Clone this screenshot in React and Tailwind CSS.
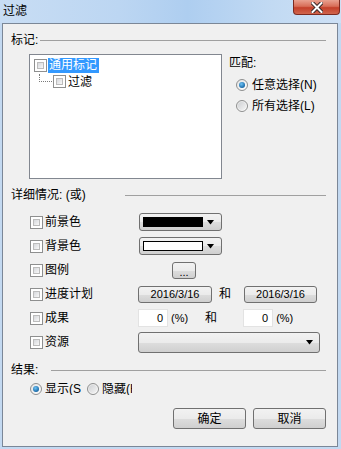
import React from "react";

const font = { fontFamily: '"Liberation Sans", "Noto Sans CJK SC", sans-serif' };

function Check() {
  return (
    <div className="w-[13px] h-[13px] border border-[#8e8f8f] bg-white p-[2px] shrink-0">
      <div className="w-full h-full border border-[#bcbcbc] bg-gradient-to-br from-[#d6d8dc] to-[#f8f8f8]" />
    </div>
  );
}

function Radio({ on }) {
  return (
    <div className="w-[12px] h-[12px] rounded-full border border-[#8e8f8f] bg-gradient-to-br from-[#e4e4e4] to-[#ffffff] flex items-center justify-center shrink-0">
      {on ? (
        <div className="w-[6px] h-[6px] rounded-full bg-[radial-gradient(circle_at_40%_35%,#6fc3f5,#1a6aa8_70%,#0e3f6e)]" />
      ) : (
        <div className="w-[8px] h-[8px] rounded-full bg-gradient-to-br from-[#cfd1d4] to-[#f4f4f4]" />
      )}
    </div>
  );
}

function Btn({ w, h = "h-[17px]", children, extra = "" }) {
  return (
    <div
      className={`${w} ${h} ${extra} rounded-[3px] border border-[#707070] bg-[linear-gradient(#f2f2f2_0%,#ebebeb_50%,#dddddd_51%,#cfcfcf_100%)] flex items-center justify-center text-[11px] leading-none text-black shrink-0`}
    >
      {children}
    </div>
  );
}

function Arrow() {
  return (
    <svg width="8" height="5" viewBox="0 0 8 5" className="shrink-0">
      <path d="M0 0 H7 L3.5 4.5 Z" fill="#000" />
    </svg>
  );
}

function Header({ label, labelW, lineMl = "ml-[1px]" }) {
  return (
    <div className="flex items-center h-[16px] pl-[8px] pr-[11px]">
      <div className={`${labelW} shrink-0 text-[12px] leading-[16px] whitespace-nowrap`}>{label}</div>
      <div className={`flex-1 h-px bg-[#a0a0a0] ${lineMl}`} />
    </div>
  );
}

function Row({ label, children }) {
  return (
    <div className="flex items-center h-[24px] pl-[27px]">
      <div className="w-[108px] shrink-0 flex items-center gap-[2px]">
        <Check />
        <span className="text-[12px] leading-none whitespace-nowrap">{label}</span>
      </div>
      <div className="flex items-center">{children}</div>
    </div>
  );
}

function NumInput() {
  return (
    <div className="w-[30px] h-[18px] bg-white border border-[#e3e3e3] flex items-center justify-end pr-[4px] text-[11px] leading-none shrink-0">
      0
    </div>
  );
}

export default function App() {
  return (
    <div className="w-[341px] h-[449px] bg-[#c3d9f1] flex flex-col text-black overflow-hidden" style={font}>
      {/* title bar */}
      <div className="h-[23px] flex justify-between bg-[linear-gradient(90deg,#c8ddf4_0%,#bcd6f2_35%,#aecef0_55%,#c2daf3_80%,#cde0f5_100%)] pl-[3px]">
        <div className="text-[12px] leading-[22px] text-black">过滤</div>
        <div className="w-[47px] h-[15px] mr-[1px] rounded-b-[4px] border border-t-0 border-[#7c2a20] bg-[linear-gradient(#e9a190_0%,#d86e58_45%,#c4402a_55%,#d0654d_100%)] flex items-center justify-center">
          <svg width="12" height="11" viewBox="0 0 12 11">
            <path d="M1.5 1 L10.5 10 M10.5 1 L1.5 10" stroke="#3b2a2a" strokeWidth="4" strokeLinecap="square" />
            <path d="M1.5 1 L10.5 10 M10.5 1 L1.5 10" stroke="#ffffff" strokeWidth="2" strokeLinecap="square" />
          </svg>
        </div>
      </div>
      {/* client */}
      <div className="ml-[2px] w-[336px] h-[424px] border border-[#7b8797] bg-[#f0f0f0] flex flex-col">
        <div className="mt-[8px]">
          <Header label="标记:" labelW="w-[28px]" />
        </div>
        <div className="flex mt-[6px]">
          <div className="ml-[26px] w-[193px] h-[125px] bg-white border border-[#828790] pt-[3px] pl-[4px] shrink-0">
            <div className="flex items-center h-[15px]">
              <Check />
              <div className="ml-[1px] bg-[#3399ff] text-white text-[12px] leading-[15px] px-[1px] w-[51px]">通用标记</div>
            </div>
            <div className="flex items-center h-[15px] mt-[1px]">
              <div className="relative w-[19px] h-[15px]">
                <div className="absolute left-[5px] top-0 h-[8px] border-l border-dotted border-[#7a7a7a]" />
                <div className="absolute left-[5px] top-[7px] w-[13px] border-t border-dotted border-[#7a7a7a]" />
              </div>
              <Check />
              <span className="ml-[2px] text-[12px] leading-none">过滤</span>
            </div>
          </div>
          <div className="ml-[7px] mt-[2px]">
            <div className="text-[12px] leading-[14px]">匹配:</div>
            <div className="ml-[7px] mt-[5px] flex items-center h-[20px] gap-[4px]">
              <Radio on />
              <span className="text-[12px] leading-none">任意选择(N)</span>
            </div>
            <div className="ml-[7px] mt-[1px] flex items-center h-[20px] gap-[4px]">
              <Radio />
              <span className="text-[12px] leading-none">所有选择(L)</span>
            </div>
          </div>
        </div>
        <div className="mt-[8px]">
          <Header label="详细情况: (或)" labelW="w-[114px]" lineMl="ml-0" />
        </div>
        <div className="mt-[7px] flex flex-col">
          <Row label="前景色">
            <Btn w="w-[83px]" h="h-[18px]" extra="ml-[1px] justify-start pl-[3px] gap-[4px]">
              <div className="w-[60px] h-[10px] bg-black" />
              <Arrow />
            </Btn>
          </Row>
          <Row label="背景色">
            <Btn w="w-[83px]" h="h-[18px]" extra="ml-[1px] justify-start pl-[3px] gap-[4px]">
              <div className="w-[60px] h-[10px] bg-white border border-black" />
              <Arrow />
            </Btn>
          </Row>
          <Row label="图例">
            <Btn w="w-[24px]" extra="ml-[34px]">
              <span className="mt-[4px]">...</span>
            </Btn>
          </Row>
          <Row label="进度计划">
            <Btn w="w-[74px]">2016/3/16</Btn>
            <span className="ml-[7px] text-[12px] leading-none">和</span>
            <Btn w="w-[73px]" extra="ml-[13px]">2016/3/16</Btn>
          </Row>
          <Row label="成果">
            <NumInput />
            <span className="ml-[3px] text-[11px] leading-none">(%)</span>
            <span className="ml-[17px] text-[12px] leading-none">和</span>
            <div className="ml-[26px]">
              <NumInput />
            </div>
            <span className="ml-[3px] text-[11px] leading-none">(%)</span>
          </Row>
          <Row label="资源">
            <Btn w="w-[182px]" h="h-[21px]" extra="justify-end pr-[5px] rounded-[3px]">
              <Arrow />
            </Btn>
          </Row>
        </div>
        <div className="mt-[8px]">
          <Header label="结果:" labelW="w-[40px]" lineMl="ml-0" />
        </div>
        <div className="mt-[3px] h-[16px] flex items-center pl-[27px]">
          <Radio on />
          <span className="ml-[3px] text-[12px] leading-none w-[36px] overflow-hidden whitespace-nowrap">显示(S)</span>
          <div className="ml-[6px]">
            <Radio />
          </div>
          <span className="ml-[3px] text-[12px] leading-none w-[30px] overflow-hidden whitespace-nowrap">隐藏(H)</span>
        </div>
        <div className="mt-[11px] flex justify-end pr-[11px] gap-[7px]">
          <Btn w="w-[73px]" h="h-[21px]" extra="text-[12px]">确定</Btn>
          <Btn w="w-[73px]" h="h-[21px]" extra="text-[12px]">取消</Btn>
        </div>
      </div>
    </div>
  );
}
